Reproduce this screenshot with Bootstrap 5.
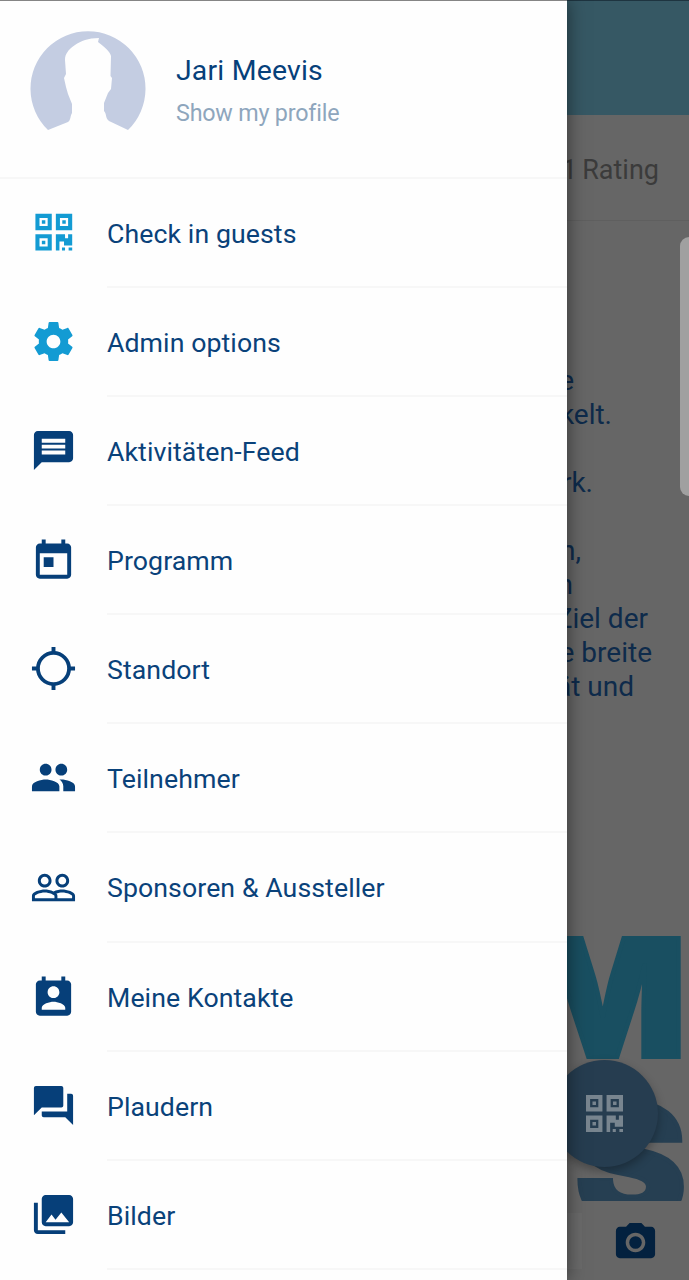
<!DOCTYPE html>
<html lang="de">
<head>
<meta charset="utf-8">
<meta name="viewport" content="width=device-width, initial-scale=1">
<title>Event menu</title>
<link href="https://cdn.jsdelivr.net/npm/bootstrap@5.3.0/dist/css/bootstrap.min.css" rel="stylesheet">
<style>
  body { font-family: Roboto, "Noto Sans", sans-serif; background: #666; color: #06407a; }
  .screen { width: 689px; height: 1280px; }
  .drawer { width: 567px; background: #fefefe; border-top: 1px solid #858585; box-shadow: 0 0 18px rgba(0,0,0,.5); z-index: 3; }
  .profile { height: 178px; padding: 0 30px; border-bottom: 2px solid #f7f7f7; }
  .avatar { width: 116px; height: 102px; margin-top: 30px; }
  .who { margin: 49px 0 0 30px; }
  .who-name { font-size: 28.4px; line-height: 42px; letter-spacing: .2px; }
  .who-link { font-size: 23.3px; line-height: 42px; color: #8ea6bd; letter-spacing: -.2px; }
  .entry { height: 109.08px; padding-left: 30px; color: #0a427a; text-decoration: none; }
  .entry svg { width: 47px; height: 47px; fill: #063f79; flex: none; margin-bottom: 2px; }
  .entry .bright { fill: #139bd3; }
  .entry-label { margin-left: 30px; padding-top: 3px; font-size: 26.7px; letter-spacing: .08px; border-bottom: 2px solid #f7f7f7; }
  .backdrop-page { padding-left: 500px; }
  .bar-top { height: 115px; background: #365864; border-top: 1px solid #1e3440; margin-left: -500px; }
  .rating { height: 106px; font-size: 27px; color: #3b3b3b; padding: 5px 30px 0 0; border-bottom: 1px solid #5f5f5f; }
  .rating span { margin-right: 5px; }
  .story { padding-top: 143px; height: 715px; font-size: 28px; line-height: 34px; color: #0e2b4b; }
  .story div { height: 34px; white-space: nowrap; padding-right: var(--gap); }
  .logo { height: 265px; padding-right: 9px; font-family: Inter, Roboto, sans-serif; font-weight: 900; font-size: 163px; color: #194f61; }
  .logo span { transform-origin: right; -webkit-text-stroke: 4px currentColor; }
  .logo-top { line-height: 123px; transform: scaleX(1.08); margin-right: -7px; }
  .logo-low { line-height: 208px; transform: scaleX(1.03); margin-right: -7px; color: #263f52; }
  .fab { width: 107px; height: 107px; left: 551px; top: 1060px; background: #263d50; box-shadow: 0 4px 10px rgba(0,0,0,.3); z-index: 2; }
  .scroll-thumb { width: 9px; height: 259px; top: 237px; right: 0; background: #a0a0a0; border-radius: 9px 0 0 9px; }
  .composer { height: 79px; gap: 30px; }
  .composer svg { margin-top: 3px; }
  .composer-field { width: 82px; height: 56px; background: #6a6a6a; }
</style>
</head>
<body>
<div class="screen position-relative overflow-hidden">
  <main class="backdrop-page">
    <div class="bar-top"></div>
    <div class="rating d-flex align-items-center justify-content-end text-nowrap"><span>1</span>Rating</div>
    <div class="story text-end">
      <div style="--gap:115px">e</div>
      <div style="--gap:77px">kelt.</div>
      <div></div>
      <div style="--gap:96px">rk.</div>
      <div></div>
      <div style="--gap:108px">n,</div>
      <div style="--gap:116px">n</div>
      <div style="--gap:41px">Ziel der</div>
      <div style="--gap:37px">e breite</div>
      <div style="--gap:55px">ät und</div>
    </div>
    <div class="logo overflow-hidden d-flex flex-column align-items-end"><span class="logo-top">M</span><span class="logo-low">S</span></div>
    <div class="composer d-flex align-items-center">
      <div class="composer-field"></div>
      <svg width="47" height="47" viewBox="0 0 24 24" fill="#03213f"><circle cx="12" cy="12" r="3.200"/><path d="M9 2L7.170 4H4c-1.100 0-2 .9-2 2v12c0 1.100.9 2 2 2h16c1.100 0 2-.9 2-2V6c0-1.100-.9-2-2-2h-3.170L15 2H9zm3 15c-2.760 0-5-2.240-5-5s2.240-5 5-5 5 2.240 5 5-2.240 5-5 5z"/></svg>
    </div>
  </main>
  <div class="scroll-thumb position-absolute"></div>
  <div class="fab position-absolute rounded-circle d-flex align-items-center justify-content-center">
    <svg width="37" height="37" viewBox="0 0 36 36" fill="#78858f"><use href="#qr"/></svg>
  </div>

  <nav class="drawer position-absolute top-0 start-0 h-100 overflow-hidden">
    <div class="profile d-flex align-items-start">
      <svg class="avatar" viewBox="0 0 116 102"><path fill="#c4cde2" d="M18 99A57.500 57.500 0 1 1 98 99L79 90C75 87 77 83 74 80V72L78 62L81 58L82 47L80.500 45L81 25C80 20 74 16 68 11L69 7C58 7 51 10 45 14C38 19 35 23 35 29L36 43L34 47L36 56L38 63L42 73V82C40 85 41 89 38 91Z"/></svg>
      <div class="who"><div class="who-name">Jari Meevis</div><div class="who-link">Show my profile</div></div>
    </div>
    <a class="entry d-flex align-items-center"><svg class="bright" viewBox="0 0 46 46"><g transform="translate(5.300 4.700)"><path id="qr" fill-rule="evenodd" d="M0 0H16V16H0ZM4 4V12H12V4ZM6.300 6.300H9.700V9.700H6.300ZM20 0H36V16H20ZM24 4V12H32V4ZM26.300 6.300H29.700V9.700H26.300ZM0 20H16V36H0ZM4 24V32H12V24ZM6.300 26.300H9.700V29.700H6.300ZM20 20H29V24H32V20H36V31H28V27H23.500V36H20ZM26 33H29V36H26ZM32.500 33H36V36H32.500Z"/></g></svg><span class="entry-label h-100 flex-fill d-flex align-items-center">Check in guests</span></a>
    <a class="entry d-flex align-items-center"><svg class="bright" viewBox="0 0 24 24"><path d="M19.430 12.980c.04-.32.07-.64.07-.98s-.03-.66-.07-.98l2.110-1.650c.19-.15.24-.42.12-.64l-2-3.460c-.12-.22-.39-.3-.61-.22l-2.490 1c-.52-.4-1.080-.73-1.690-.98l-.38-2.650C14.460 2.180 14.250 2 14 2h-4c-.25 0-.46.18-.49.42l-.38 2.650c-.61.25-1.170.59-1.690.98l-2.490-1c-.23-.09-.49 0-.61.22l-2 3.460c-.13.22-.07.49.12.64l2.110 1.650c-.04.32-.07.65-.07.98s.03.66.07.98l-2.110 1.650c-.19.15-.24.42-.12.64l2 3.460c.12.22.39.3.61.22l2.490-1c.52.4 1.080.73 1.690.98l.38 2.650c.03.24.24.42.49.42h4c.25 0 .46-.18.49-.42l.38-2.650c.61-.25 1.170-.59 1.690-.98l2.490 1c.23.09.49 0 .61-.22l2-3.460c.12-.22.07-.49-.12-.64l-2.110-1.650zM12 15.500c-1.930 0-3.500-1.570-3.500-3.500s1.570-3.500 3.500-3.500 3.500 1.570 3.500 3.500-1.570 3.500-3.500 3.500z"/></svg><span class="entry-label h-100 flex-fill d-flex align-items-center">Admin options</span></a>
    <a class="entry d-flex align-items-center"><svg viewBox="0 0 24 24"><path d="M20 2H4c-1.100 0-1.990.9-1.990 2L2 22l4-4h14c1.100 0 2-.9 2-2V4c0-1.100-.9-2-2-2zm-2 12H6v-2h12v2zm0-3H6V9h12v2zm0-3H6V6h12v2z"/></svg><span class="entry-label h-100 flex-fill d-flex align-items-center">Aktivitäten-Feed</span></a>
    <a class="entry d-flex align-items-center"><svg viewBox="0 0 24 24"><path transform="translate(0 .8)" d="M19 3h-1V1h-2v2H8V1H6v2H5c-1.110 0-1.990.9-1.990 2L3 19c0 1.100.89 2 2 2h14c1.100 0 2-.9 2-2V5c0-1.100-.9-2-2-2zm0 16H5V8h14v11zM7 10h5v5H7z"/></svg><span class="entry-label h-100 flex-fill d-flex align-items-center">Programm</span></a>
    <a class="entry d-flex align-items-center"><svg viewBox="0 0 24 24"><circle cx="12" cy="12" r="7.950" fill="none" stroke="#063f79" stroke-width="1.950"/><path d="M11 1h2v3h-2zM11 20h2v3h-2zM1 11h3v2H1zM20 11h3v2h-3z"/></svg><span class="entry-label h-100 flex-fill d-flex align-items-center">Standort</span></a>
    <a class="entry d-flex align-items-center"><svg viewBox="0 0 24 24"><path d="M16 11c1.660 0 2.990-1.340 2.990-3S17.660 5 16 5c-1.660 0-3 1.340-3 3s1.340 3 3 3zm-8 0c1.660 0 2.990-1.340 2.990-3S9.660 5 8 5C6.340 5 5 6.340 5 8s1.340 3 3 3zm0 2c-2.330 0-7 1.170-7 3.500V19h14v-2.500c0-2.330-4.670-3.500-7-3.500zm8 0c-.29 0-.62.02-.97.05 1.160.84 1.970 1.970 1.970 3.450V19h6v-2.500c0-2.330-4.670-3.500-7-3.500z"/></svg><span class="entry-label h-100 flex-fill d-flex align-items-center">Teilnehmer</span></a>
    <a class="entry d-flex align-items-center"><svg viewBox="0 0 24 24"><path d="M16.500 13c-1.200 0-3.070.34-4.500 1-1.430-.67-3.300-1-4.500-1C5.330 13 1 14.080 1 16.250V19h22v-2.750c0-2.170-4.330-3.250-6.500-3.250zm-4 4.500h-10v-1.250c0-.54 2.560-1.750 5-1.750s5 1.210 5 1.750v1.250zm9 0H14v-1.250c0-.46-.2-.86-.52-1.220.88-.3 1.960-.53 3.020-.53 2.440 0 5 1.210 5 1.750v1.250zM7.500 12c1.930 0 3.500-1.570 3.500-3.500S9.430 5 7.500 5 4 6.570 4 8.500 5.570 12 7.500 12zm0-5.500c1.100 0 2 .9 2 2s-.9 2-2 2-2-.9-2-2 .9-2 2-2zm9 5.500c1.930 0 3.500-1.570 3.500-3.500S18.430 5 16.500 5 13 6.570 13 8.500s1.570 3.500 3.500 3.500zm0-5.500c1.100 0 2 .9 2 2s-.9 2-2 2-2-.9-2-2 .9-2 2-2z"/></svg><span class="entry-label h-100 flex-fill d-flex align-items-center">Sponsoren &amp; Aussteller</span></a>
    <a class="entry d-flex align-items-center"><svg viewBox="0 0 24 24"><path transform="translate(0 .8)" d="M19 3h-1V1h-2v2H8V1H6v2H5c-1.110 0-2 .9-2 2v14c0 1.100.89 2 2 2h14c1.100 0 2-.9 2-2V5c0-1.100-.9-2-2-2zm-7 3c1.660 0 3 1.340 3 3s-1.340 3-3 3-3-1.340-3-3 1.340-3 3-3zm6 12H6v-1c0-2 4-3.100 6-3.100s6 1.100 6 3.100v1z"/></svg><span class="entry-label h-100 flex-fill d-flex align-items-center">Meine Kontakte</span></a>
    <a class="entry d-flex align-items-center"><svg viewBox="0 0 24 24"><path d="M21 6h-2v9H6v2c0 .55.45 1 1 1h11l4 4V7c0-.55-.45-1-1-1zm-4 6V3c0-.55-.45-1-1-1H3c-.55 0-1 .45-1 1v14l4-4h10c.55 0 1-.45 1-1z"/></svg><span class="entry-label h-100 flex-fill d-flex align-items-center">Plaudern</span></a>
    <a class="entry d-flex align-items-center"><svg viewBox="0 0 24 24"><path d="M22 16V4c0-1.100-.9-2-2-2H8c-1.100 0-2 .9-2 2v12c0 1.100.9 2 2 2h12c1.100 0 2-.9 2-2zm-11-4l2.030 2.710L16 11l4 5H8l3-4zM2 6v14c0 1.100.9 2 2 2h14v-2H4V6H2z"/></svg><span class="entry-label h-100 flex-fill d-flex align-items-center">Bilder</span></a>
  </nav>
</div>
<script src="https://cdn.jsdelivr.net/npm/bootstrap@5.3.0/dist/js/bootstrap.bundle.min.js"></script>
</body>
</html>
